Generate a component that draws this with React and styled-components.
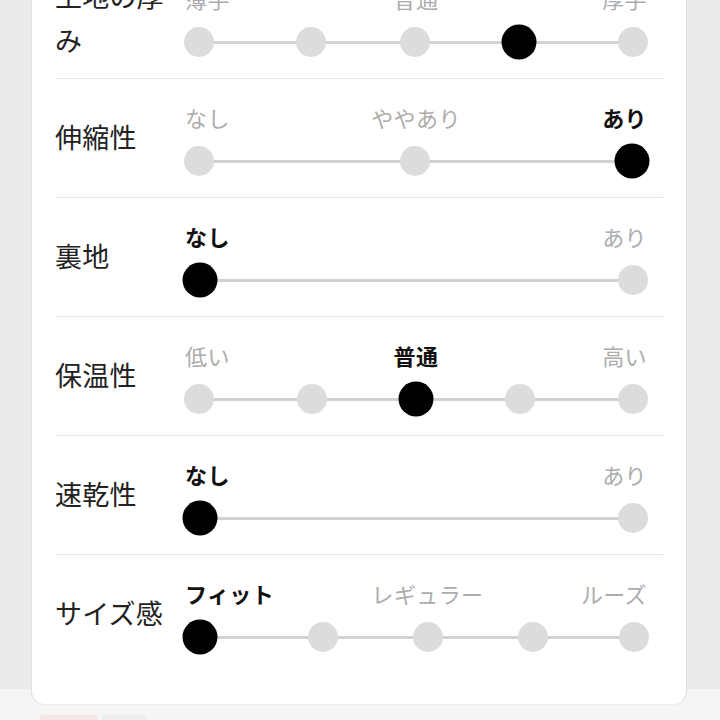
import React from "react";
import styled, { createGlobalStyle } from "styled-components";

const Global = createGlobalStyle`
  html, body { margin: 0; padding: 0; }
  body {
    background: #f6f5f5;
    overflow: hidden;
    font-family: "Noto Sans CJK JP", "Noto Sans", sans-serif;
    width: 720px;
    height: 720px;
  }
`;

const Backdrop = styled.div`
  background: #ebebeb;
  margin-top: -40px;
  padding: 0 33px 0 31px;
  height: 729px;
  box-sizing: border-box;
`;

const Card = styled.div`
  background: #ffffff;
  border-left: 1px solid #e0e0e0;
  border-right: 1px solid #dcdcdc;
  border-radius: 0 0 13px 13px;
  padding: 0 23px 31px 23px;
  box-shadow: 0 1px 0 #ececec;
  position: relative;
  z-index: 1;
`;

const Row = styled.div`
  display: flex;
  align-items: stretch;
  height: 118px;
  border-bottom: ${(p) => (p.$last ? "none" : "1.5px solid #e6e6e6")};
`;

const Label = styled.div`
  width: 129px;
  flex: none;
  align-self: center;
  font-size: 27px;
  line-height: 44px;
  letter-spacing: 0.2px;
  color: #222;
  margin-top: -2px;
`;

const Slider = styled.div`
  width: 465px;
  flex: none;
  display: flex;
  flex-direction: column;
  padding-top: 23px;
  box-sizing: border-box;
`;

const Options = styled.div`
  display: flex;
  justify-content: space-between;
  height: 30px;
  padding: 0 2px 0 1px;
`;

const Option = styled.span`
  font-size: 22px;
  line-height: 30px;
  color: ${(p) => (p.$active ? "#111" : "#acacac")};
  font-weight: ${(p) => (p.$active ? 700 : 400)};
  letter-spacing: 0.4px;
`;

const Track = styled.div`
  position: relative;
  height: 40px;
  margin-top: 9px;
`;

const Line = styled.div`
  position: absolute;
  top: 50%;
  height: 3px;
  margin-top: -1.5px;
  background: #d2d2d2;
`;

const Dot = styled.div`
  position: absolute;
  top: 50%;
  width: ${(p) => (p.$active ? 35 : 30)}px;
  height: ${(p) => (p.$active ? 35 : 30)}px;
  border-radius: 50%;
  background: ${(p) => (p.$active ? "#000" : "#dcdcdc")};
  transform: translate(-50%, -50%);
`;

const Footer = styled.div`
  display: flex;
  gap: 4px;
  padding: 26px 0 0 40px;
`;

const Chip = styled.div`
  width: ${(p) => p.$w}px;
  height: 20px;
  border-radius: 3px 3px 0 0;
  background: ${(p) => p.$bg};
`;

const rows = [
  { label: "土地の厚み", opts: ["薄手", "普通", "厚手"], active: -1, dots: [15, 127, 231, 335, 449], sel: 3 },
  { label: "伸縮性", opts: ["なし", "ややあり", "あり"], active: 2, dots: [15, 231, 448], sel: 2 },
  { label: "裏地", opts: ["なし", "あり"], active: 0, dots: [16, 449], sel: 0 },
  { label: "保温性", opts: ["低い", "普通", "高い"], active: 1, dots: [15, 128, 232, 336, 449], sel: 2 },
  { label: "速乾性", opts: ["なし", "あり"], active: 0, dots: [16, 449], sel: 0 },
  { label: "サイズ感", opts: ["フィット", "レギュラー", "ルーズ"], active: 0, dots: [16, 139, 244, 349, 450], sel: 0 },
];

export default function App() {
  return (
    <>
      <Global />
      <Backdrop>
        <Card>
          {rows.map((r, i) => {
            const first = r.dots[0];
            const last = r.dots[r.dots.length - 1];
            return (
              <Row key={r.label} $last={i === rows.length - 1}>
                <Label>{r.label}</Label>
                <Slider>
                  <Options>
                    {r.opts.map((o, j) => (
                      <Option key={o} $active={j === r.active}>
                        {o}
                      </Option>
                    ))}
                  </Options>
                  <Track>
                    <Line style={{ left: first, width: last - first }} />
                    {r.dots.map((d, j) => (
                      <Dot key={j} $active={j === r.sel} style={{ left: d }} />
                    ))}
                  </Track>
                </Slider>
              </Row>
            );
          })}
        </Card>
      </Backdrop>
      <Footer>
        <Chip $w={58} $bg="#f7e6e8" />
        <Chip $w={44} $bg="#eeeeee" />
      </Footer>
    </>
  );
}
